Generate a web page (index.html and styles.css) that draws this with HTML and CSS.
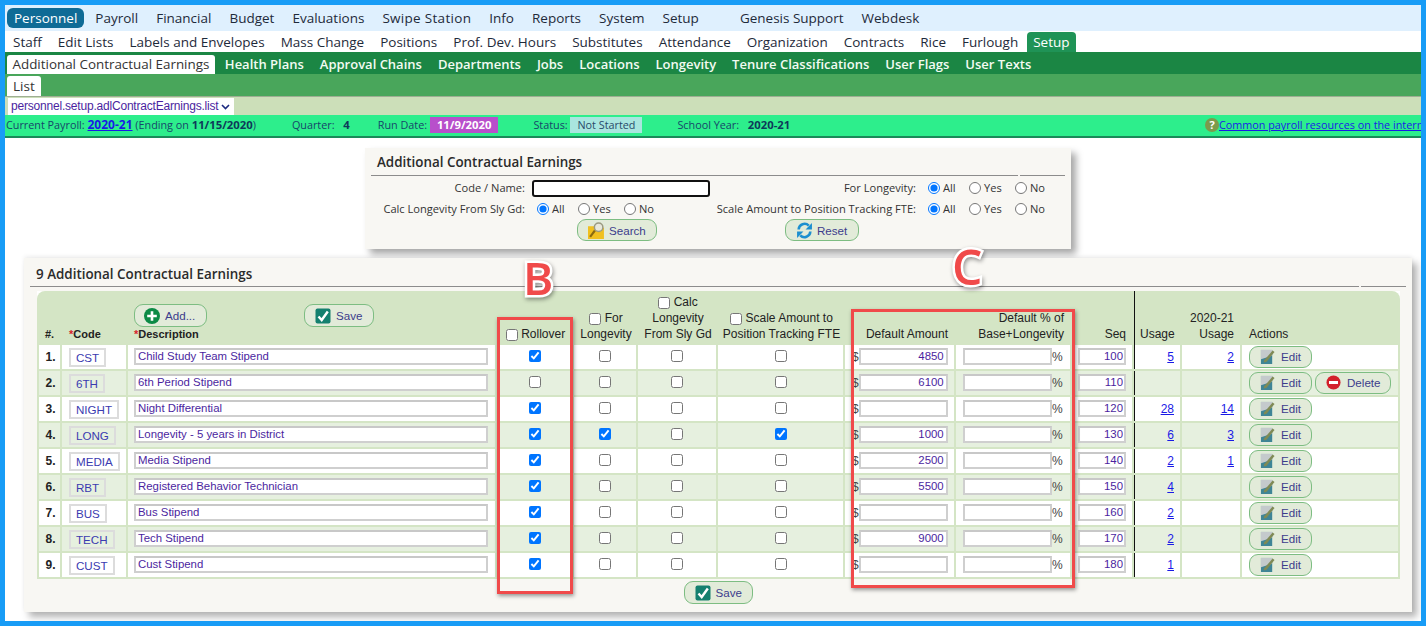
FILE: index.html
```html
<!DOCTYPE html>
<html lang="en">
<head>
<meta charset="utf-8">
<title>Additional Contractual Earnings</title>
<link rel="stylesheet" href="styles.css">
</head>
<body>
<svg class="defs" width="0" height="0" aria-hidden="true">
  <symbol id="i-save" viewBox="0 0 16 16"><rect x="0.5" y="0.5" width="15" height="15" rx="2" fill="#14806f"/><path d="M3.5 8.5 6.7 12 12.8 3.5" fill="none" stroke="#fff" stroke-width="2.4"/></symbol>
  <symbol id="i-add" viewBox="0 0 16 16"><circle cx="8" cy="8" r="8" fill="#0c8a45"/><path d="M8 3.2v9.6M3.2 8h9.6" stroke="#fff" stroke-width="2.6"/></symbol>
  <symbol id="i-edit" viewBox="0 0 16 16"><rect x="1" y="1" width="12" height="15" fill="#3f8596"/><path d="M1 1h12v6L1 11z" fill="#c4cacc"/><path d="M4.5 12 13.5 1.5 15.5 3.2 7 13.5 4 14.5z" fill="#7f8a55"/></symbol>
  <symbol id="i-del" viewBox="0 0 16 16"><circle cx="8" cy="8" r="7.5" fill="#d3212c"/><path d="M3.2 8h9.6" stroke="#fff" stroke-width="3.2"/></symbol>
  <symbol id="i-search" viewBox="0 0 16 16"><path d="M0 4h6l1 1.5h8V16H0z" fill="#f0c020"/><path d="M2 14 6.5 8" stroke="#8a6a10" stroke-width="2"/><circle cx="10" cy="5" r="4" fill="#e8e8da" stroke="#9a9a80" stroke-width="1.4"/></symbol>
  <symbol id="i-reset" viewBox="0 0 16 16"><path d="M2.5 7A5.5 5.5 0 0 1 12 3.5" fill="none" stroke="#1c8fd0" stroke-width="2.4"/><path d="M15 1v6H9z" fill="#1c8fd0"/><path d="M13.5 9A5.5 5.5 0 0 1 4 12.5" fill="none" stroke="#1c8fd0" stroke-width="2.4"/><path d="M1 15V9h6z" fill="#1c8fd0"/></symbol>
</svg>
<div class="frame">
  <nav class="nav nav-top">
    <a class="pill">Personnel</a><a>Payroll</a><a>Financial</a><a>Budget</a><a>Evaluations</a><a class="wide">Swipe Station</a><a>Info</a><a>Reports</a><a>System</a><a>Setup</a><a class="far">Genesis Support</a><a>Webdesk</a>
  </nav>
  <nav class="nav nav-sub">
    <a>Staff</a><a>Edit Lists</a><a>Labels and Envelopes</a><a>Mass Change</a><a>Positions</a><a>Prof. Dev. Hours</a><a>Substitutes</a><a>Attendance</a><a>Organization</a><a>Contracts</a><a>Rice</a><a>Furlough</a><a class="active">Setup</a>
  </nav>
  <nav class="nav nav-third">
    <a class="active">Additional Contractual Earnings</a><a>Health Plans</a><a>Approval Chains</a><a>Departments</a><a>Jobs</a><a>Locations</a><a>Longevity</a><a>Tenure Classifications</a><a>User Flags</a><a>User Texts</a>
  </nav>
  <nav class="nav nav-fourth"><a class="active">List</a></nav>
  <div class="route"><div class="route-select">personnel.setup.adlContractEarnings.list <svg width="9" height="6" viewBox="0 0 9 6"><path d="M1 1l3.5 3.5L8 1" fill="none" stroke="#1c2a80" stroke-width="1.6"/></svg></div></div>
  <div class="status">
    <span>Current Payroll: <a class="link"><b>2020-21</b></a> (Ending on <b>11/15/2020</b>)</span>
    <span class="s-quarter">Quarter: <b class="pad">4</b></span>
    <span class="s-run">Run Date: <b class="badge badge-run">11/9/2020</b></span>
    <span class="s-state">Status: <span class="badge badge-state">Not Started</span></span>
    <span class="s-year">School Year: <b class="pad">2020-21</b></span>
    <span class="s-help"><span class="help">?</span><a class="link">Common payroll resources on the internet</a></span>
  </div>
  <main class="content">
    <section class="search">
      <div class="head-line head-search"><h2 class="panel-title">Additional Contractual Earnings</h2><span class="tail"></span></div>
      <div class="search-grid">
        <label class="f-label">Code / Name:</label>
        <div class="f-value"><input class="name-input" type="text"></div>
        <label class="f-label">For Longevity:</label>
        <div class="f-radios f-last">
          <label class="r-all"><input type="radio" name="a" checked>All</label><label class="r-yes"><input type="radio" name="a">Yes</label><label><input type="radio" name="a">No</label>
        </div>
        <label class="f-label">Calc Longevity From Sly Gd:</label>
        <div class="f-radios f-mid">
          <label class="r-all"><input type="radio" name="b" checked>All</label><label class="r-yes"><input type="radio" name="b">Yes</label><label><input type="radio" name="b">No</label>
        </div>
        <label class="f-label">Scale Amount to Position Tracking FTE:</label>
        <div class="f-radios f-last">
          <label class="r-all"><input type="radio" name="c" checked>All</label><label class="r-yes"><input type="radio" name="c">Yes</label><label><input type="radio" name="c">No</label>
        </div>
      </div>
      <div class="search-actions">
        <a class="btn btn-search"><svg class="ico ico-lg"><use href="#i-search"/></svg>Search</a>
        <a class="btn btn-reset"><svg class="ico ico-lg"><use href="#i-reset"/></svg>Reset</a>
      </div>
    </section>
    <section class="results">
      <div class="head-line head-results"><h2 class="panel-title">9 Additional Contractual Earnings</h2><span class="tail"></span></div>
      <table class="grid">
        <colgroup><col class="c1"><col class="c2"><col class="c3"><col class="c4"><col class="c5"><col class="c6"><col class="c7"><col class="c8"><col class="c9"><col class="c10"><col class="c11"><col class="c12"><col class="c13"></colgroup>
        <thead>
          <tr>
            <th class="bold ctr">#.</th>
            <th class="bold code-h"><i>*</i>Code</th>
            <th class="bold desc-h">
              <div class="head-btns"><a class="btn btn-add"><svg class="ico"><use href="#i-add"/></svg>Add...</a><a class="btn btn-save"><svg class="ico"><use href="#i-save"/></svg>Save</a></div>
              <i>*</i>Description
            </th>
            <th class="ctr"><input class="ck" type="checkbox"> Rollover</th>
            <th class="ctr"><input class="ck" type="checkbox"> For<br>Longevity</th>
            <th class="ctr"><input class="ck" type="checkbox"> Calc<br>Longevity<br>From Sly Gd</th>
            <th class="ctr"><input class="ck" type="checkbox"> Scale Amount to<br>Position Tracking FTE</th>
            <th class="rgt">Default Amount</th>
            <th class="rgt">Default % of<br>Base+Longevity</th>
            <th class="rgt">Seq</th>
            <th class="rgt divider">Usage</th>
            <th class="rgt">2020-21<br>Usage</th>
            <th class="act-h">Actions</th>
          </tr>
        </thead>
        <tbody>
          <tr><td class="num">1.</td><td><span class="code">CST</span></td><td><input class="in in-desc" value="Child Study Team Stipend"></td><td class="ctr"><input class="ck" type="checkbox" checked></td><td class="ctr"><input class="ck" type="checkbox"></td><td class="ctr"><input class="ck" type="checkbox"></td><td class="ctr"><input class="ck" type="checkbox"></td><td class="money">$<input class="in in-num" value="4850"></td><td class="pct"><input class="in in-num" value="">%</td><td class="seq"><input class="in in-seq" value="100"></td><td class="rgt divider"><a class="link">5</a></td><td class="rgt"><a class="link">2</a></td><td class="act"><a class="btn btn-edit"><svg class="ico"><use href="#i-edit"/></svg>Edit</a></td></tr>
          <tr><td class="num">2.</td><td><span class="code">6TH</span></td><td><input class="in in-desc" value="6th Period Stipend"></td><td class="ctr"><input class="ck" type="checkbox"></td><td class="ctr"><input class="ck" type="checkbox"></td><td class="ctr"><input class="ck" type="checkbox"></td><td class="ctr"><input class="ck" type="checkbox"></td><td class="money">$<input class="in in-num" value="6100"></td><td class="pct"><input class="in in-num" value="">%</td><td class="seq"><input class="in in-seq" value="110"></td><td class="rgt divider"></td><td class="rgt"></td><td class="act"><a class="btn btn-edit"><svg class="ico"><use href="#i-edit"/></svg>Edit</a><a class="btn btn-del"><svg class="ico"><use href="#i-del"/></svg>Delete</a></td></tr>
          <tr><td class="num">3.</td><td><span class="code">NIGHT</span></td><td><input class="in in-desc" value="Night Differential"></td><td class="ctr"><input class="ck" type="checkbox" checked></td><td class="ctr"><input class="ck" type="checkbox"></td><td class="ctr"><input class="ck" type="checkbox"></td><td class="ctr"><input class="ck" type="checkbox"></td><td class="money">$<input class="in in-num" value=""></td><td class="pct"><input class="in in-num" value="">%</td><td class="seq"><input class="in in-seq" value="120"></td><td class="rgt divider"><a class="link">28</a></td><td class="rgt"><a class="link">14</a></td><td class="act"><a class="btn btn-edit"><svg class="ico"><use href="#i-edit"/></svg>Edit</a></td></tr>
          <tr><td class="num">4.</td><td><span class="code">LONG</span></td><td><input class="in in-desc" value="Longevity - 5 years in District"></td><td class="ctr"><input class="ck" type="checkbox" checked></td><td class="ctr"><input class="ck" type="checkbox" checked></td><td class="ctr"><input class="ck" type="checkbox"></td><td class="ctr"><input class="ck" type="checkbox" checked></td><td class="money">$<input class="in in-num" value="1000"></td><td class="pct"><input class="in in-num" value="">%</td><td class="seq"><input class="in in-seq" value="130"></td><td class="rgt divider"><a class="link">6</a></td><td class="rgt"><a class="link">3</a></td><td class="act"><a class="btn btn-edit"><svg class="ico"><use href="#i-edit"/></svg>Edit</a></td></tr>
          <tr><td class="num">5.</td><td><span class="code">MEDIA</span></td><td><input class="in in-desc" value="Media Stipend"></td><td class="ctr"><input class="ck" type="checkbox" checked></td><td class="ctr"><input class="ck" type="checkbox"></td><td class="ctr"><input class="ck" type="checkbox"></td><td class="ctr"><input class="ck" type="checkbox"></td><td class="money">$<input class="in in-num" value="2500"></td><td class="pct"><input class="in in-num" value="">%</td><td class="seq"><input class="in in-seq" value="140"></td><td class="rgt divider"><a class="link">2</a></td><td class="rgt"><a class="link">1</a></td><td class="act"><a class="btn btn-edit"><svg class="ico"><use href="#i-edit"/></svg>Edit</a></td></tr>
          <tr><td class="num">6.</td><td><span class="code">RBT</span></td><td><input class="in in-desc" value="Registered Behavior Technician"></td><td class="ctr"><input class="ck" type="checkbox" checked></td><td class="ctr"><input class="ck" type="checkbox"></td><td class="ctr"><input class="ck" type="checkbox"></td><td class="ctr"><input class="ck" type="checkbox"></td><td class="money">$<input class="in in-num" value="5500"></td><td class="pct"><input class="in in-num" value="">%</td><td class="seq"><input class="in in-seq" value="150"></td><td class="rgt divider"><a class="link">4</a></td><td class="rgt"></td><td class="act"><a class="btn btn-edit"><svg class="ico"><use href="#i-edit"/></svg>Edit</a></td></tr>
          <tr><td class="num">7.</td><td><span class="code">BUS</span></td><td><input class="in in-desc" value="Bus Stipend"></td><td class="ctr"><input class="ck" type="checkbox" checked></td><td class="ctr"><input class="ck" type="checkbox"></td><td class="ctr"><input class="ck" type="checkbox"></td><td class="ctr"><input class="ck" type="checkbox"></td><td class="money">$<input class="in in-num" value=""></td><td class="pct"><input class="in in-num" value="">%</td><td class="seq"><input class="in in-seq" value="160"></td><td class="rgt divider"><a class="link">2</a></td><td class="rgt"></td><td class="act"><a class="btn btn-edit"><svg class="ico"><use href="#i-edit"/></svg>Edit</a></td></tr>
          <tr><td class="num">8.</td><td><span class="code">TECH</span></td><td><input class="in in-desc" value="Tech Stipend"></td><td class="ctr"><input class="ck" type="checkbox" checked></td><td class="ctr"><input class="ck" type="checkbox"></td><td class="ctr"><input class="ck" type="checkbox"></td><td class="ctr"><input class="ck" type="checkbox"></td><td class="money">$<input class="in in-num" value="9000"></td><td class="pct"><input class="in in-num" value="">%</td><td class="seq"><input class="in in-seq" value="170"></td><td class="rgt divider"><a class="link">2</a></td><td class="rgt"></td><td class="act"><a class="btn btn-edit"><svg class="ico"><use href="#i-edit"/></svg>Edit</a></td></tr>
          <tr><td class="num">9.</td><td><span class="code">CUST</span></td><td><input class="in in-desc" value="Cust Stipend"></td><td class="ctr"><input class="ck" type="checkbox" checked></td><td class="ctr"><input class="ck" type="checkbox"></td><td class="ctr"><input class="ck" type="checkbox"></td><td class="ctr"><input class="ck" type="checkbox"></td><td class="money">$<input class="in in-num" value=""></td><td class="pct"><input class="in in-num" value="">%</td><td class="seq"><input class="in in-seq" value="180"></td><td class="rgt divider"><a class="link">1</a></td><td class="rgt"></td><td class="act"><a class="btn btn-edit"><svg class="ico"><use href="#i-edit"/></svg>Edit</a></td></tr>
        </tbody>
      </table>
      <div class="save-row"><a class="btn btn-save2"><svg class="ico"><use href="#i-save"/></svg>Save</a></div>
    </section>
  </main>
  <div class="mark box-b"></div>
  <div class="mark box-c"></div>
  <div class="letter letter-b">B</div>
  <div class="letter letter-c">C</div>
</div>
</body>
</html>
```
FILE: styles.css
```css
* { box-sizing: border-box; }
html, body { margin: 0; padding: 0; }
body { width: 1426px; height: 626px; overflow: hidden; font-family: "Liberation Sans", Arial, sans-serif; background: #189cf6; }
.defs { position: absolute; }
.frame { position: relative; margin: 5px 5px 5px 5px; width: 1416px; height: 616px; background: #fff; overflow: hidden; }

.nav { display: flex; align-items: center; font-family: "Open Sans", sans-serif; white-space: nowrap; }
.nav-top { height: 26px; background: #dff0fe; padding-left: 2px; font-size: 13.5px; color: #1e2a3a; }
.nav-top a { margin-right: 18px; }
.nav-top .pill { background: #0f6b96; color: #fff; border-radius: 6px; height: 20px; line-height: 20px; padding: 0 7px; margin-right: 11px; }
.nav-top .wide { letter-spacing: .3px; }
.nav-top .far { margin-left: 23px; }
.nav-sub { height: 21px; background: #fff; padding-left: 8px; font-size: 13.5px; color: #1e2a3a; align-items: flex-end; }
.nav-sub a { margin-right: 16px; line-height: 20px; }
.nav-sub .active { background: #1f9356; color: #fff; border-radius: 4px 4px 0 0; padding: 0 6px; height: 20px; margin-left: -7px; }
.nav-third { height: 22px; background: #1b8644; padding-left: 2px; font-size: 13px; font-weight: 600; color: #f3fbf2; align-items: flex-end; }
.nav-third a { margin-right: 16px; line-height: 18px; height: 19px; }
.nav-third .active { background: #fff; color: #333; font-size: 13.4px; font-weight: 400; padding: 0 5.5px; border-radius: 3px 3px 0 0; margin-right: 10px; }
.nav-fourth { height: 22px; background: #49a65b; padding-left: 2px; font-size: 13.5px; align-items: flex-end; border-bottom: 0; }
.nav-fourth .active { background: #fff; color: #333; padding: 0 6px; height: 20px; line-height: 20px; border-radius: 3px 3px 0 0; }

.route { height: 19px; background: #ccdfb9; padding: 1px 0 0 3px; border-top: 1px solid #9fae93; }
.route-select { width: 226px; height: 17px; background: #fff; font-size: 12px; line-height: 17px; color: #4b1fa0; padding-left: 3px; letter-spacing: -0.2px; display: flex; align-items: center; justify-content: space-between; padding-right: 4px; }

.status { display: flex; align-items: center; height: 23px; background: #2dee8c; border-bottom: 2px solid #1a8a5a; font-family: "Open Sans", sans-serif; font-size: 10.8px; color: #17456a; white-space: nowrap; padding: 0 0 2px 1px; }
.status b { font-weight: 700; font-size: 11.3px; color: #0e3a5a; }
.link { color: #1a1ae6; text-decoration: underline; font-family: inherit; }
.status .link b { color: #1a1ae6; font-size: 12px; }
.pad { margin-left: 6px; }
.s-quarter { margin-left: 36px; }
.s-run { margin-left: 28px; }
.s-state { margin-left: 35px; }
.s-year { margin-left: 35px; }
.s-help { margin-left: auto; display: flex; align-items: center; width: 216px; flex: none; }
.badge { display: inline-block; padding: 0 7px; height: 16px; line-height: 16px; }
.status .badge-run { background: #b84fcb; color: #fff; }
.badge-state { background: #a9e6df; color: #2a4a6a; }
.help { width: 14px; height: 14px; border-radius: 50%; background: #7c9a4c; color: #fff; font-weight: 700; font-size: 11px; line-height: 14px; text-align: center; flex: none; }

.content { display: flex; flex-direction: column; background: #fff; }
.search { width: 706px; height: 101px; margin: 10px 0 0 360px; background: #f8f7f3; box-shadow: 5px 5px 7px rgba(0,0,0,.35); padding: 0 6px; }
.head-line { display: flex; gap: 2px; }
.head-search { height: 28px; }
.head-results { height: 29px; }
.panel-title { margin: 0; flex: 1; font: 600 13.4px/28px "Open Sans", sans-serif; color: #2b2b2b; padding-left: 6px; border-bottom: 1px solid #8c8c8c; }
.head-results .panel-title { line-height: 32px; }
.tail { border-bottom: 1px solid #8c8c8c; }
.head-search .tail { width: 45px; }
.head-results .tail { width: 45px; }
.search-grid { display: grid; grid-template-columns: 154px 185px 206px 149px; grid-auto-rows: 21px; align-items: center; font-family: "Open Sans", sans-serif; font-size: 11.1px; color: #333; padding-top: 1px; }
.f-label { text-align: right; }
.f-value { padding-left: 7px; display: flex; }
.f-mid { padding-left: 12px; }
.f-last { padding-left: 12px; }
.name-input { width: 178px; height: 17px; margin-top: 2px; border: 2px solid #111; border-radius: 3px; background: #fff; padding: 0; }
.f-radios { display: flex; align-items: center; }
.f-radios label { display: flex; align-items: center; }
.f-radios input { width: 12px; height: 12px; margin: 0 3px 0 0; }
.r-all { width: 41px; }
.r-yes { width: 46px; }
.search-actions { display: flex; height: 22px; padding-left: 206px; margin-top: 0; }

.btn { display: inline-flex; align-items: center; height: 23px; border: 1.5px solid #7dbd82; border-radius: 9px; background: #e2ebd9; font-family: "Liberation Sans", Arial, sans-serif; font-size: 11.6px; font-weight: 400; color: #3c3c8c; white-space: nowrap; }
.ico { width: 16px; height: 16px; flex: none; }
.ico-lg { width: 17px; height: 17px; }
.btn-search { width: 80px; height: 22px; padding-left: 10px; gap: 4px; }
.btn-reset { width: 74px; height: 22px; padding-left: 10px; gap: 4px; margin-left: 128px; }
.btn-add { width: 73px; padding-left: 9px; gap: 5px; }
.btn-save { width: 70px; padding-left: 10px; gap: 5px; margin-left: 97px; }
.btn-save2 { width: 69px; padding-left: 10px; gap: 5px; }
.btn-edit { width: 63px; height: 22px; padding-left: 10px; gap: 6px; }
.btn-edit .ico { width: 15px; height: 15px; }
.btn-del { width: 76px; height: 22px; padding-left: 10px; gap: 6px; margin-left: 3px; }
.btn-del .ico { width: 15px; height: 15px; }

.results { width: 1388px; height: 354px; margin: 9px 0 0 19px; background: #f8f7f3; box-shadow: 5px 5px 7px rgba(0,0,0,.3), 0 -2px 4px rgba(0,0,0,.06); padding: 0 6px; position: relative; }
.grid { margin: 4px 0 0 7px; width: 1363px; table-layout: fixed; border-collapse: separate; border-spacing: 0; background: #fff; font-size: 12px; color: #222; }
.c1 { width: 25px; } .c2 { width: 66px; } .c3 { width: 369px; } .c4 { width: 77px; } .c5 { width: 64px; } .c6 { width: 80px; } .c7 { width: 127px; } .c8 { width: 111px; } .c9 { width: 116px; } .c10 { width: 62px; } .c11 { width: 48px; } .c12 { width: 60px; } .c13 { width: 158px; }
.grid th { height: 54px; background: #d4e5c5; font-weight: 400; vertical-align: bottom; padding: 0 8px 3px 6px; line-height: 16px; text-align: left; white-space: nowrap; overflow: visible; }
.grid th:first-child { border-top-left-radius: 8px; }
.grid th:last-child { border-top-right-radius: 8px; }
.grid th.ctr { text-align: center; padding-left: 0; padding-right: 0; }
.grid th.rgt { text-align: right; }
.grid th.bold { font-weight: 700; font-size: 11px; }
.grid i { color: #d8222a; font-style: normal; font-weight: 700; }
.grid th.code-h { padding-left: 7px; }
.grid th.desc-h { padding-left: 6px; }
.head-btns { display: flex; margin-bottom: -1px; }
.grid td { height: 26px; padding: 0; border-right: 2px solid #d4e5c5; border-bottom: 2px solid #d4e5c5; vertical-align: middle; white-space: nowrap; }
.grid td:first-child { border-left: 2px solid #d4e5c5; }
.grid tbody tr:nth-child(even) td { background: #e6f0df; }
.num { font-weight: 700; text-align: center; padding-left: 2px !important; }
.code { display: inline-block; height: 19px; line-height: 16px; margin-left: 7px; padding: 0 5px; border: 2px solid #dcdcdc; font-size: 11.6px; color: #3a3ab0; }
.in { height: 17px; margin-bottom: 2px; border: 2px solid #cfcfcf; border-top-color: #c8c8c8; background: #fff; padding: 0 2px; font: 11.4px "Liberation Sans", Arial, sans-serif; color: #4b1fa0; vertical-align: middle; }
.in-desc { width: 354px; margin-left: 6px; display: block; }
.in-num { width: 89px; text-align: right; padding-right: 2px; }
.in-seq { width: 48px; text-align: right; padding-right: 1px; }
.money { padding-left: 7px !important; color: #444; }
.money .in { margin-left: 0; }
.pct { padding-left: 7px !important; color: #444; }
.seq { padding-left: 6px !important; }
td.ctr { text-align: center; }
td .ck { margin-bottom: 2px; }
.ck { width: 12px; height: 12px; margin: 0; vertical-align: middle; }
td.rgt { text-align: right; padding-right: 6px !important; }
.divider { box-shadow: inset 1px 0 0 #111; }
.act { padding-left: 7px !important; }
.act .btn { vertical-align: middle; margin-bottom: 1px; }
.act-h { padding-left: 7px !important; }
.save-row { display: flex; justify-content: center; margin-top: 2px; }

.mark { position: absolute; border: 3px solid #f04a4a; box-shadow: 1px 2px 4px rgba(0,0,0,.4); pointer-events: none; }
.box-b { left: 492px; top: 312px; width: 76px; height: 277px; }
.box-c { left: 846px; top: 304px; width: 224px; height: 279px; }
.letter { position: absolute; font: 600 46px/46px "Open Sans", sans-serif; color: #f04a4a; -webkit-text-stroke: 5px #fff; paint-order: stroke fill; filter: drop-shadow(1px 2px 2px rgba(0,0,0,.4)); }
.letter-b { left: 518px; top: 249px; }
.letter-c { left: 947px; top: 239px; font-size: 48px; }
```
